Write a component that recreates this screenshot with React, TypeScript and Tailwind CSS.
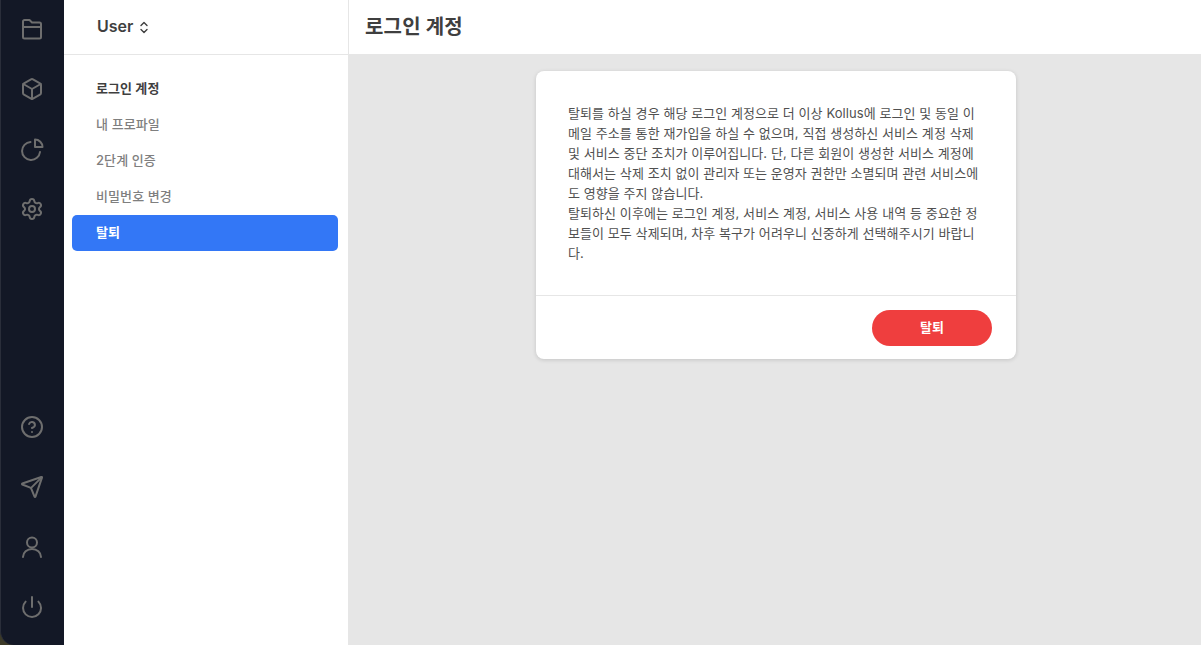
import { Box, ChevronDown, ChevronUp, CircleHelp, Power, Send, Settings } from "lucide-react";

const FolderIcon = () => (
  <svg width="24" height="24" viewBox="0 0 24 24" fill="none" stroke="currentColor" strokeWidth="2" strokeLinecap="round" strokeLinejoin="round">
    <path d="M3 10V4.5A1.5 1.5 0 0 1 4.5 3h5l2.5 2.5h7.5A1.5 1.5 0 0 1 21 7v13a1.5 1.5 0 0 1-1.5 1.5h-15A1.5 1.5 0 0 1 3 20V10h18" />
  </svg>
);

const PieIcon = () => (
  <svg width="24" height="24" viewBox="0 0 24 24" fill="none" stroke="currentColor" strokeWidth="2" strokeLinecap="round" strokeLinejoin="round">
    <path d="M10.5 5a9 9 0 1 0 9.5 10" />
    <path d="M15 2.5v7.5h7.5a7.5 7.5 0 0 0-7.5-7.5z" />
  </svg>
);

const UserIcon = () => (
  <svg width="24" height="24" viewBox="0 0 24 24" fill="none" stroke="currentColor" strokeWidth="2" strokeLinecap="round" strokeLinejoin="round">
    <circle cx="12" cy="7.5" r="5" />
    <path d="M3 22a9 8 0 0 1 18 0" />
  </svg>
);

const topIcons = [FolderIcon, Box, PieIcon, Settings];
const bottomIcons = [CircleHelp, Send, UserIcon, Power];

const menu = ["로그인 계정", "내 프로파일", "2단계 인증", "비밀번호 변경", "탈퇴"];

const App = () => {
  return (
    <div className="h-[645px] w-[1201px] flex overflow-hidden bg-[#e6e6e6] font-['Inter','Noto_Sans_CJK_KR',sans-serif] text-[#3f3f3f]">
      {/* Icon rail */}
      <div className="w-16 shrink-0 bg-[#3c3a28]">
        <div className="h-full flex flex-col justify-between pb-2 bg-[#131826] rounded-bl-[14px] border-l border-[#2a2e3a]">
          <div className="flex flex-col -mt-px">
            {topIcons.map((Icon, i) => (
              <div key={i} className="h-[60px] flex items-center justify-center pr-px text-[#6e6e6e]">
                <Icon />
              </div>
            ))}
          </div>
          <div className="flex flex-col">
            {bottomIcons.map((Icon, i) => (
              <div key={i} className="h-[60px] flex items-center justify-center pr-px text-[#6e6e6e]">
                <Icon />
              </div>
            ))}
          </div>
        </div>
      </div>

      {/* Sub menu */}
      <div className="w-[285px] shrink-0 bg-white border-r border-[#e6e6e6]">
        <div className="h-[55px] flex items-center pl-[33px] pb-[2px] border-b border-[#e6e6e6]">
          <span className="text-base font-semibold">User</span>
          <span className="ml-[5px] mt-[2px] flex flex-col text-[#3f3f3f]">
            <ChevronUp size={12} strokeWidth={2.75} className="-mb-[5px]" />
            <ChevronDown size={12} strokeWidth={2.75} />
          </span>
        </div>
        <div className="flex flex-col pt-4 pl-2 pr-[10px]">
          {menu.map((name, i) => (
            <a
              key={name}
              className={`h-9 flex items-center pl-6 rounded-[5px] text-[13px] tracking-[0.1px] ${
                i === 0 ? "font-bold text-[#3f3f3f]" : i === 4 ? "font-bold bg-[#3377f6] text-white" : "font-medium text-[#7f7f7f]"
              }`}
            >
              {name}
            </a>
          ))}
        </div>
      </div>

      {/* Content */}
      <div className="flex-1 flex flex-col">
        <div className="h-[54px] shrink-0 flex items-center pl-4 bg-white">
          <h1 className="text-xl font-bold tracking-[0.2px]">로그인 계정</h1>
        </div>
        <div className="flex-1 flex justify-center pt-[17px] pl-[2px]">
          <div className="w-[480px] h-[288px] bg-white rounded-lg shadow-[0_1px_4px_rgba(0,0,0,0.15)] flex flex-col">
            <div className="shrink-0 p-8 border-b border-[#e6e6e6]">
              <p className="h-[160px] text-[13px] leading-5 tracking-[0.07px] break-all text-[#505050]">
                탈퇴를 하실 경우 해당 로그인 계정으로 더 이상 Kollus에 로그인 및 동일 이메일 주소를 통한 재가입을 하실 수 없으며, 직접 생성하신 서비스 계정 삭제 및 서비스 중단 조치가 이루어집니다. 단, 다른 회원이 생성한 서비스 계정에 대해서는 삭제 조치 없이 관리자 또는 운영자 권한만 소멸되며 관련 서비스에도 영향을 주지 않습니다.
                <br />
                탈퇴하신 이후에는 로그인 계정, 서비스 계정, 서비스 사용 내역 등 중요한 정보들이 모두 삭제되며, 차후 복구가 어려우니 신중하게 선택해주시기 바랍니다.
              </p>
            </div>
            <div className="flex-1 flex items-center justify-end pr-6">
              <button className="w-[120px] h-9 rounded-full bg-[#ef3e3e] text-white text-[13px] font-bold">탈퇴</button>
            </div>
          </div>
        </div>
      </div>
    </div>
  );
};

export default App;
